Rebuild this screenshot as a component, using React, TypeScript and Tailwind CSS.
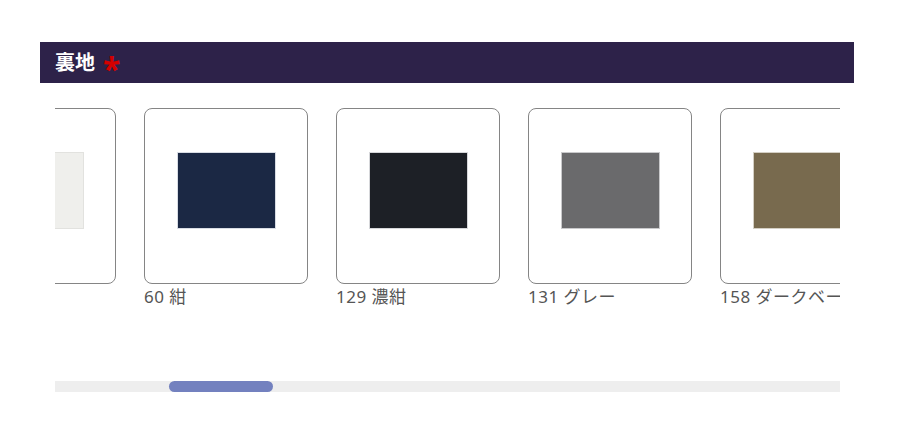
import React from "react";

const items = [
  { label: "", color: "#efefec", border: "#e2e2df" },
  { label: "60 紺", color: "#1b2844", border: "#d8dce4" },
  { label: "129 濃紺", color: "#1d2026", border: "#d6d7da" },
  { label: "131 グレー", color: "#6a6a6c", border: "#c9c9cb" },
  { label: "158 ダークベージュ", color: "#786a4e", border: "#d4cfc4" },
];

export default function App() {
  return (
    <div
      className="w-[900px] h-[438px] bg-white"
      style={{ fontFamily: '"Noto Sans", "Noto Sans CJK JP", sans-serif' }}
    >
      <div className="pt-[42px] pl-[40px] w-[854px]">
        <div className="h-[41px] bg-[#2d2249] flex items-center pl-[15px] gap-[8px]">
          <span className="text-white font-bold text-[20px] leading-none">裏地</span>
          <span className="text-[#d40000] font-bold text-[32px] leading-none mt-[12px]">*</span>
        </div>
      </div>
      <div className="ml-[55px] w-[785px] mt-[25px] overflow-hidden">
        <div className="flex gap-[28px] ml-[-103px]">
          {items.map((it, i) => (
            <div key={i} className="flex flex-col shrink-0 w-[164px]">
              <div className="h-[176px] w-[164px] border border-[#858585] rounded-[8px] flex justify-center pt-[44px] box-border">
                <div
                  className="w-[97px] h-[75px]"
                  style={{ backgroundColor: it.color, boxShadow: `0 0 0 1px ${it.border}` }}
                />
              </div>
              <div className="mt-[2px] h-[22px] text-[17px] leading-[22px] tracking-[0.5px] text-[#555555] whitespace-nowrap overflow-hidden">
                {it.label}
              </div>
            </div>
          ))}
        </div>
      </div>
      <div className="ml-[55px] w-[785px] mt-[73px] h-[11px] bg-[#eeeeee] relative">
        <div className="absolute left-[114px] top-0 h-[11px] w-[104px] rounded-full bg-[#7381bf]" />
      </div>
    </div>
  );
}
